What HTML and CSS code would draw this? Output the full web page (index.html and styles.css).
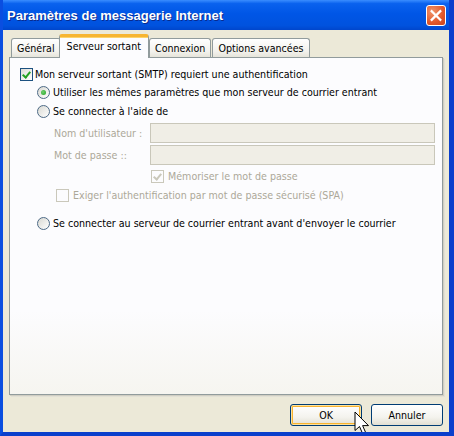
FILE: index.html
```html
<!DOCTYPE html>
<html lang="fr">
<head>
    <meta charset="UTF-8">
    <title>Paramètres de messagerie Internet</title>
    <link rel="stylesheet" href="styles.css">
</head>
<body>
    <div class="window">
        <div class="titlebar">
            <span class="title">Paramètres de messagerie Internet</span>
            <span class="close">
                <svg width="21" height="21" viewBox="0 0 21 21">
                    <path d="M6 6 L15 15 M15 6 L6 15" stroke="#fff" stroke-width="2.4" stroke-linecap="square"/>
                </svg>
            </span>
        </div>
        <div class="client">
            <div class="tabs">
                <div class="tab">Général</div>
                <div class="tab active">Serveur sortant</div>
                <div class="tab">Connexion</div>
                <div class="tab">Options avancées</div>
            </div>
            <div class="panel">
                <div class="row first">
                    <span class="check on"></span>Mon serveur sortant (SMTP) requiert une authentification
                </div>
                <div class="row sub">
                    <span class="radio on"></span>Utiliser les mêmes paramètres que mon serveur de courrier entrant
                </div>
                <div class="row sub">
                    <span class="radio"></span>Se connecter à l'aide de
                </div>
                <div class="field">
                    <label>Nom d'utilisateur :</label>
                    <span class="input"></span>
                </div>
                <div class="field">
                    <label>Mot de passe ::</label>
                    <span class="input"></span>
                </div>
                <div class="row remember disabled">
                    <span class="check on"></span>Mémoriser le mot de passe
                </div>
                <div class="row spa disabled">
                    <span class="check"></span>Exiger l'authentification par mot de passe sécurisé (SPA)
                </div>
                <div class="row sub last">
                    <span class="radio"></span>Se connecter au serveur de courrier entrant avant d'envoyer le courrier
                </div>
            </div>
            <div class="buttons">
                <span class="btn hot">OK</span>
                <span class="btn">Annuler</span>
            </div>
        </div>
        <svg class="cursor" width="16" height="26" viewBox="0 0 16 26">
            <path d="M1 1 L1 19.5 L5.5 15.5 L9 23.5 L12 22.3 L8.6 14.6 L14.5 14.6 Z" fill="#fff" stroke="#000" stroke-width="1" stroke-linejoin="miter"/>
        </svg>
    </div>
</body>
</html>
```

FILE: styles.css
```css
html, body {
    margin: 0;
    padding: 0;
    background: #ece9d8;
}
.window {
    position: relative;
    width: 454px;
    height: 436px;
    box-sizing: border-box;
    display: flex;
    flex-direction: column;
    border-left: 3px solid #0a4ee0;
    border-right: 5px solid #0a3fcc;
    border-bottom: 4px solid #0a3fcc;
    font-family: "DejaVu Sans Condensed", "DejaVu Sans", sans-serif;
    font-size: 10.6px;
    color: #000;
    overflow: hidden;
}
.titlebar {
    height: 30px;
    margin: 0 -5px 0 -3px;
    padding: 0 8px 0 7px;
    display: flex;
    align-items: center;
    justify-content: space-between;
    background: linear-gradient(#3a8dff 0, #0a62ee 12%, #0056e6 45%, #0052de 85%, #0046cc 100%);
}
.title {
    color: #fff;
    font-family: "Liberation Sans", Arial, sans-serif;
    font-weight: bold;
    font-size: 13px;
    text-shadow: 1px 1px 0 #0a2a8c;
    padding-top: 1px;
}
.close {
    width: 20px;
    height: 21px;
    box-sizing: border-box;
    border: 1px solid #fff;
    border-radius: 3px;
    background: radial-gradient(circle at 30% 30%, #f0956c, #e0572a 60%, #c9441c);
    display: flex;
    align-items: center;
    justify-content: center;
}
.close svg {
    margin: -1px;
}
.client {
    flex: 1;
    display: flex;
    flex-direction: column;
    background: #ece9d8;
    padding: 3px 4px 0 6px;
}
.tabs {
    display: flex;
    align-items: flex-end;
    padding-left: 2px;
    height: 24px;
    position: relative;
    z-index: 1;
}
.tab {
    height: 18px;
    line-height: 18px;
    padding: 0 5px;
    border: 1px solid #919b9c;
    border-bottom: none;
    border-radius: 3px 3px 0 0;
    background: linear-gradient(#ffffff, #f2f1ec 70%, #e6e4da);
}
.tab + .tab {
    margin-left: 1px;
}
.tab.active {
    height: 21px;
    line-height: 19px;
    margin: 0 -2px -1px -2px;
    padding: 0 7px;
    background: #fcfcfe;
    border-top: 3px solid #f7b531;
    position: relative;
    z-index: 2;
    box-shadow: inset 0 1px 0 #fcd36b;
}
.tab.active + .tab {
    margin-left: 2px;
}
.panel {
    height: 338px;
    box-sizing: border-box;
    border: 1px solid #919b9c;
    background: linear-gradient(#fcfcfe 0, #fcfcfe 75%, #f6f5f0 100%);
    box-shadow: 1px 1px 0 #d0cec2, 2px 2px 0 #e2e0d5;
    padding: 7px 0 0 10px;
    margin-right: 2px;
}
.row {
    display: flex;
    align-items: center;
    height: 18px;
    white-space: nowrap;
}
.row.sub {
    padding-left: 17px;
}
.row.sub + .row.sub {
    margin-top: 1px;
}
.row.last {
    margin-top: 10px;
}
.check {
    width: 13px;
    height: 13px;
    box-sizing: border-box;
    border: 1px solid #1c5180;
    background: linear-gradient(135deg, #dcdcd7, #ffffff);
    margin-right: 2px;
    flex: none;
    position: relative;
}
.check.on::after {
    content: "";
    position: absolute;
    left: 3px;
    top: 1px;
    width: 3px;
    height: 6px;
    border: solid #21a121;
    border-width: 0 2px 2px 0;
    transform: rotate(40deg);
}
.radio {
    width: 13px;
    height: 13px;
    box-sizing: border-box;
    border: 1px solid #4d6a86;
    border-radius: 50%;
    background: linear-gradient(135deg, #d8d8d2, #ffffff);
    margin-right: 3px;
    flex: none;
    position: relative;
}
.radio.on::after {
    content: "";
    position: absolute;
    left: 3px;
    top: 3px;
    width: 5px;
    height: 5px;
    border-radius: 50%;
    background: radial-gradient(circle at 40% 40%, #6fd06f, #21a121);
}
.disabled {
    color: #aca899;
}
.disabled .check {
    border-color: #cac8bb;
    background: #fcfcfe;
}
.disabled .check.on::after {
    border-color: #cac8bb;
}
.field {
    display: flex;
    align-items: center;
    height: 20px;
    margin-top: 3px;
    padding-left: 34px;
}
.field + .field {
    margin-top: 2px;
}
.field label {
    width: 96px;
    color: #aca899;
    white-space: nowrap;
}
.input {
    width: 285px;
    height: 20px;
    box-sizing: border-box;
    border: 1px solid #c9c7ba;
    background: #f0eee6;
}
.row.remember {
    padding-left: 131px;
    margin-top: 2px;
}
.row.remember .check {
    margin-right: 4px;
}
.row.spa {
    padding-left: 36px;
    margin-top: 1px;
}
.row.spa .check {
    margin-right: 4px;
}
.buttons {
    display: flex;
    justify-content: flex-end;
    gap: 9px;
    margin-top: 9px;
    padding-right: 2px;
}
.btn {
    width: 72px;
    height: 22px;
    box-sizing: border-box;
    border: 1px solid #003c74;
    border-radius: 3px;
    background: linear-gradient(#ffffff, #f4f3ee 60%, #e2dfd3);
    display: flex;
    align-items: center;
    justify-content: center;
}
.btn.hot {
    box-shadow: inset 0 0 0 1px #fde29c, inset 0 0 0 2px #f8b330;
}
.cursor {
    position: absolute;
    left: 351px;
    top: 411px;
}
```
